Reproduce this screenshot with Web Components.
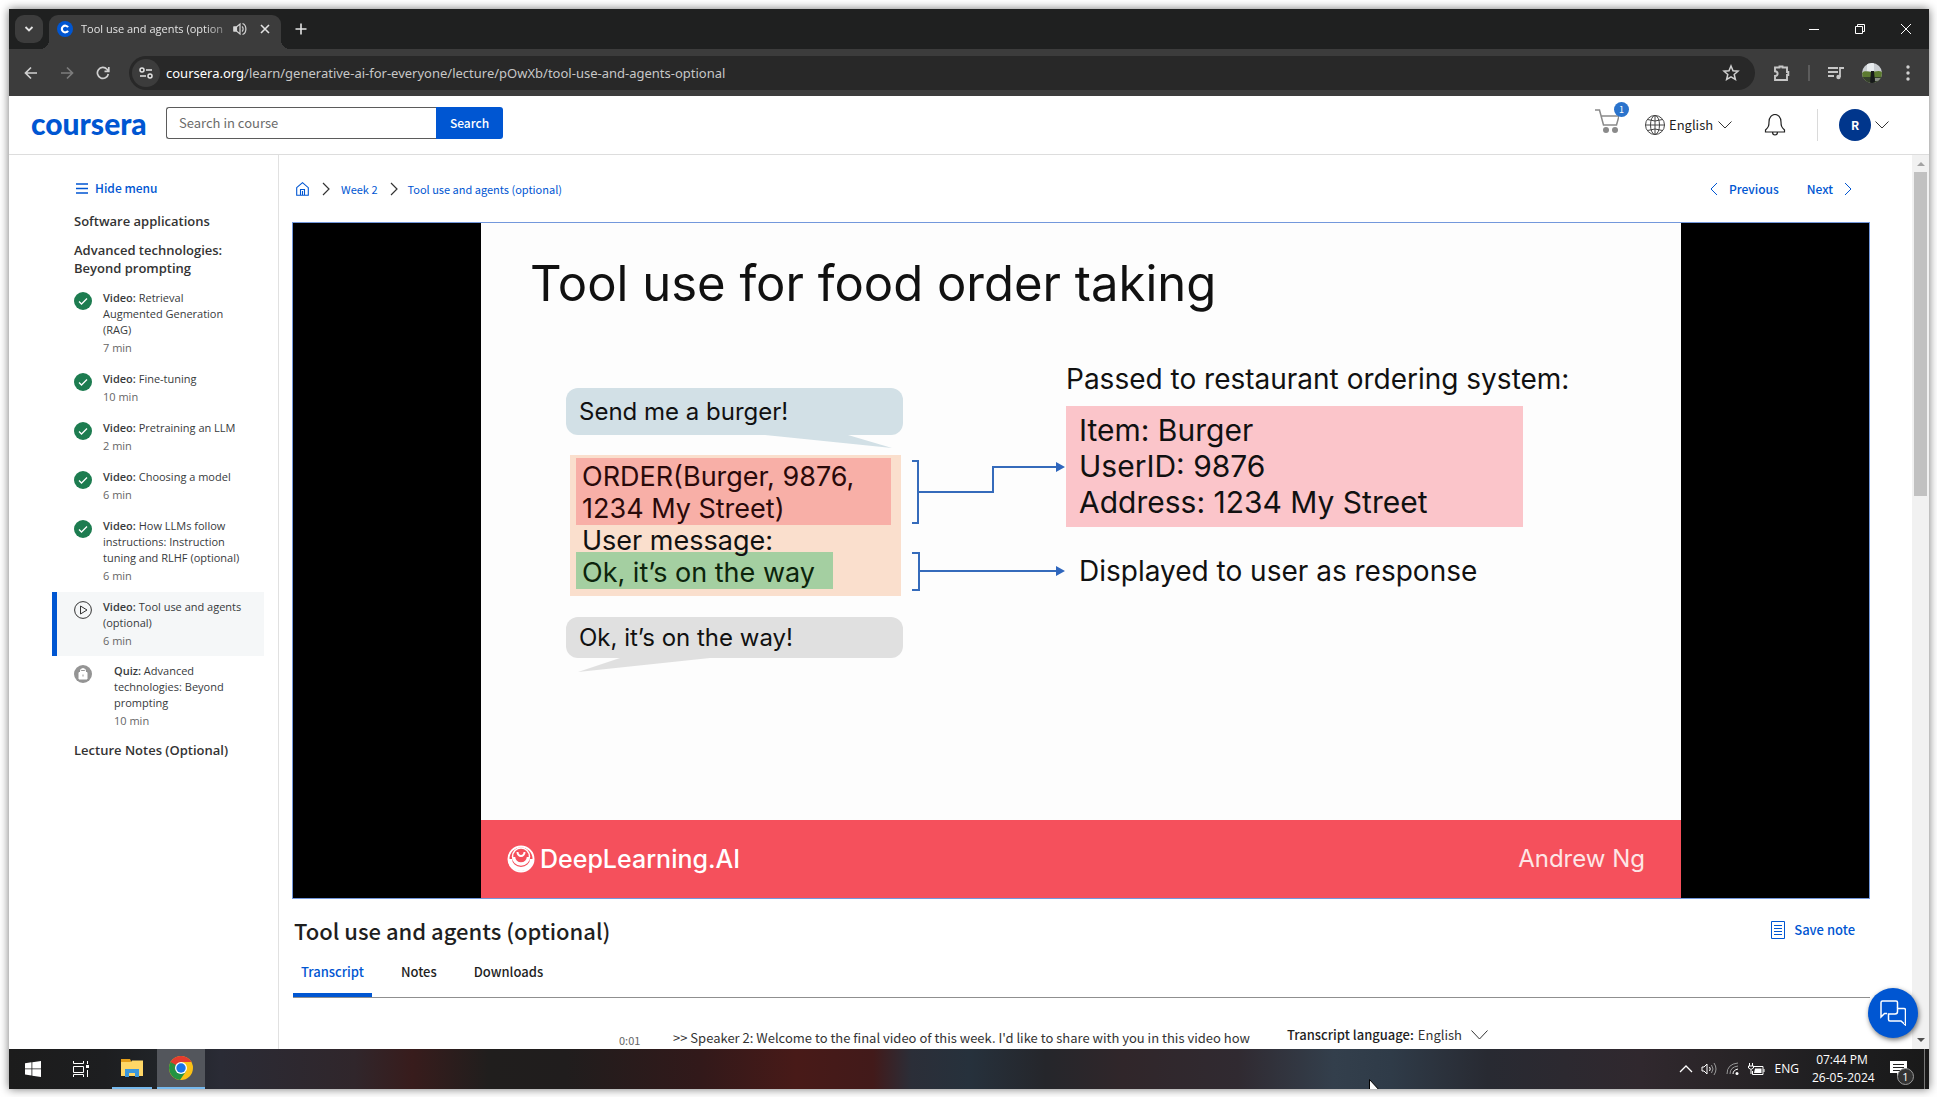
<!DOCTYPE html>
<html lang="en">
<head>
<meta charset="utf-8">
<title>Tool use and agents (optional) | Coursera</title>
<style>
html,body{margin:0;height:100%}
body{box-sizing:border-box;padding:9px 8px 8px 9px;background:#fff;overflow:hidden;
--ui:"Open Sans","Noto Sans",sans-serif;--src:"Noto Sans CJK SC","Noto Sans",sans-serif;--slide:Inter,"Open Sans",sans-serif;--blue:#0056d2;
font-family:var(--src);color:#1f1f1f}
</style>
</head>
<body>
<desktop-screen>
  <browser-tabs></browser-tabs>
  <browser-toolbar></browser-toolbar>
  <course-header></course-header>
  <course-body>
    <course-sidebar slot="side"></course-sidebar>
    <lecture-page></lecture-page>
    <page-scrollbar slot="bar"></page-scrollbar>
    <chat-button slot="chat"></chat-button>
  </course-body>
  <task-bar></task-bar>
</desktop-screen>
<script>
const base = `<style>:host,*{box-sizing:border-box}button{border:0;background:none;padding:0;margin:0;font:inherit;color:inherit;display:flex;align-items:center;justify-content:center}a{color:inherit;text-decoration:none}svg{display:block;flex:none}h1,h2,h3,p,ul{margin:0;padding:0;font-weight:inherit}</style>`;
function define(name, html) {
  const t = document.createElement('template');
  t.innerHTML = base + html;
  customElements.define(name, class extends HTMLElement {
    constructor() { super(); this.attachShadow({mode: 'open'}).append(t.content.cloneNode(true)); }
  });
}

define('desktop-screen', `<style>
:host{display:flex;flex-direction:column;height:100%;box-shadow:0 0 9px rgba(0,0,0,.55);background:#fff}
</style><slot></slot>`);

define('browser-tabs', `<style>
:host{display:flex;height:40px;background:#1f2020;padding:6px 0 0 6px;font:11px/34px var(--ui);color:#e3e3e3;flex:none}
.pick{width:28px;height:28px;border-radius:9px;background:#3c3c3c}
.tab{display:flex;align-items:center;width:232px;height:34px;margin-left:6px;padding:0 8px 6px;background:#3c3c3c;border-radius:9px 9px 0 0;position:relative}
.tab:before,.tab:after{content:"";position:absolute;bottom:0;width:9px;height:9px}
.tab:before{left:-9px;background:radial-gradient(circle at 0 0,transparent 9px,#3c3c3c 9px)}
.tab:after{right:-9px;background:radial-gradient(circle at 100% 0,transparent 9px,#3c3c3c 9px)}
.t{width:148px;margin-left:8px;white-space:nowrap;line-height:20px;-webkit-mask:linear-gradient(90deg,#000 85%,rgba(0,0,0,.3))}
.snd{margin-left:6px}.x{margin-left:10px;width:16px;height:28px}
.plus{width:28px;height:28px;margin-left:6px}
.win{margin-left:auto;display:flex}.win button{width:46px;height:28px}
</style>
<button class="pick" aria-label="Search tabs"><svg width="10" height="8" fill="none" stroke="#e3e3e3" stroke-width="1.8"><path d="M1.5 2 5 5.5 8.500 2"/></svg></button>
<div class="tab"><svg width="16" height="16" viewBox="0 0 16 16"><circle cx="8" cy="8" r="8" fill="#0056d2"/><path d="M11 9.700A3.300 3.300 0 1 1 11 6.300" fill="none" stroke="#fff" stroke-width="2.200"/></svg>
<span class="t">Tool use and agents (option</span>
<svg class="snd" width="14" height="14" viewBox="0 0 14 14" fill="none" stroke="#d5d5d5" stroke-width="1.200"><path d="M9 4.500c1.500 1.200 1.500 3.800 0 5M9.500 1.500c4.500 1.500 4.500 9.500 0 11" /><path d="M1 5v4h2.500L7 12V2L3.500 5z"/><path d="M1 5v4h2.500V5z" fill="#d5d5d5"/></svg>
<button class="x" aria-label="Close tab"><svg width="10" height="10" stroke="#e3e3e3" stroke-width="1.600"><path d="m1 1 8 8m0-8-8 8"/></svg></button></div>
<button class="plus" aria-label="New tab"><svg width="12" height="12" stroke="#e3e3e3" stroke-width="1.600"><path d="M6 .5v11M.5 6h11"/></svg></button>
<div class="win"><button aria-label="Minimize"><svg width="10" height="10" stroke="#fff"><path d="M0 5.500h10"/></svg></button>
<button aria-label="Restore"><svg width="10" height="10" stroke="#fff" fill="none"><path d="M.5 2.500h7v7h-7zM2.500 2.500v-2h7v7h-2"/></svg></button>
<button aria-label="Close"><svg width="10" height="10" stroke="#fff"><path d="m0 0 10 10m0-10L0 10"/></svg></button></div>`);

define('browser-toolbar', `<style>
:host{display:flex;align-items:center;height:47px;background:#3c3c3c;flex:none;padding:0 3px 0 4px}
:host>button{width:36px;height:34px;flex:none}
.omni{flex:1;display:flex;align-items:center;height:34px;background:#282828;border-radius:17px;margin:0 9px 0 8px;padding:0 15px 0 3px}
.tune{width:28px;height:28px;border-radius:14px;background:#3c3c3c;flex:none}
.url{flex:1;margin-left:6px;color:#c7c7c7;font:13px/34px "Noto Sans",sans-serif}.url b{font-weight:400;color:#fff}
.sep{width:2px;height:16px;background:#5c5c5c;margin:0 8px}
</style>
<button aria-label="Back"><svg width="14" height="14" fill="none" stroke="#d0d0d0" stroke-width="1.700"><path d="M13 7H2M7 1.500 1.500 7 7 12.500"/></svg></button>
<button aria-label="Forward"><svg width="14" height="14" fill="none" stroke="#7c7c7c" stroke-width="1.700"><path d="M1 7h11M7 1.500 12.500 7 7 12.500"/></svg></button>
<button aria-label="Reload"><svg width="14" height="14" fill="none" stroke="#d0d0d0" stroke-width="1.700"><path d="M12.300 8A5.500 5.500 0 1 1 11 3.200L12.500 5M12.800 1v4.300H8.500"/></svg></button>
<div class="omni"><button class="tune" aria-label="Site information"><svg width="14" height="14" fill="none" stroke="#e3e3e3" stroke-width="1.500"><circle cx="3" cy="4" r="2"/><path d="M7 4h6M1 10h6"/><circle cx="11" cy="10" r="2"/></svg></button>
<span class="url"><b>coursera.org</b>/learn/generative-ai-for-everyone/lecture/pOwXb/tool-use-and-agents-optional</span>
<button aria-label="Bookmark"><svg width="18" height="18" viewBox="0 0 18 18" fill="none" stroke="#d0d0d0" stroke-width="1.500"><path d="m9 2 2 4.800 5 .4-3.800 3.300 1.200 5L9 12.800l-4.400 2.700 1.200-5L2 7.200l5-.4z"/></svg></button></div>
<button aria-label="Extensions"><svg width="18" height="18" viewBox="0 0 18 18" fill="none" stroke="#c7c7c7" stroke-width="1.900"><path d="M2 3.500h4.500v-1h3v1h4.500v4.500h1.300v3h-1.300V16H2v-4c3.500-.2 3.500-4.500 0-4.700z"/></svg></button>
<div class="sep"></div>
<button aria-label="Media"><svg width="18" height="16" viewBox="0 0 18 16" fill="none" stroke="#c7c7c7" stroke-width="1.800"><path d="M1 3h10M1 7h10M1 11h6M13 12V3h4"/><circle cx="11.500" cy="12" r="2.200" fill="#c7c7c7" stroke="none"/></svg></button>
<button aria-label="Profile"><svg width="20" height="20" viewBox="0 0 20 20"><defs><clipPath id="c"><circle cx="10" cy="10" r="10"/></clipPath></defs><g clip-path="url(#c)"><path fill="#c9cdd1" d="M0 0h20v20H0z"/><path fill="#e8ecee" d="M5 0h7v8H5z"/><path fill="#5c7a30" d="M0 10c3-3 6-1 9-1s8-2 11 0v11H0z"/><path fill="#35402c" d="M0 14h20v6H0z"/><path fill="#16181a" d="M9 8h3l1 12H8z"/><path fill="#8b8f88" d="M13 15h7v3h-7z"/></g></svg></button>
<button aria-label="Menu"><svg width="4" height="16" fill="#d0d0d0"><circle cx="2" cy="2" r="1.700"/><circle cx="2" cy="8" r="1.700"/><circle cx="2" cy="14" r="1.700"/></svg></button>`);

define('course-header', `<style>
:host{display:flex;align-items:center;height:59px;border-bottom:1px solid #ddd;background:#fff;flex:none;padding:0 40px 0 22px;font:14px/20px var(--src)}
.logo{font:900 30px/32px Lato,sans-serif;color:var(--blue);width:135px;flex:none;padding-bottom:4px}
form{display:flex;height:32px;margin-bottom:4px}
input{width:270px;border:1px solid #5b5b5b;border-right:0;border-radius:3px 0 0 3px;padding:0 0 0 12px;font:13px/20px var(--src);color:#1f1f1f;outline:0}
input::placeholder{color:#6b6b6b;opacity:1}
form button{width:67px;background:var(--blue);color:#fff;font-weight:500;font-size:12px;border-radius:0 3px 3px 0}
.r{margin-left:auto;display:flex;align-items:center}
.cart{position:relative;width:24px;margin:0 26px 8px 0}
.cart i{position:absolute;left:19px;top:-7px;width:15px;height:15px;border-radius:8px;background:#2a73cc;color:#fff;font:9px/15px var(--src);text-align:center}
.lang{display:flex;align-items:center;gap:4px}
select{appearance:none;border:0;background:none;padding:0;margin:0;font:13px/20px var(--src);color:#1f1f1f}
.bell{margin:0 31px 0 32px}.sep{width:1px;height:32px;background:#dadada;margin-right:21px}
.me{margin-right:8px}.me b{width:32px;height:32px;border-radius:16px;background:#00368c;color:#fff;font:700 12px/32px var(--src)}
</style>
<a class="logo" href="#">coursera</a>
<form role="search"><input aria-label="Search in course" placeholder="Search in course"><button type="button">Search</button></form>
<div class="r"><button class="cart" aria-label="Shopping cart"><svg width="24" height="24" viewBox="0 0 24 24" fill="none" stroke="#8a8a8a" stroke-width="1.500"><path d="M0 1h4.500l4 15h13l2.500-9H6"/><circle cx="11" cy="21" r="3" fill="#8a8a8a" stroke="none"/><circle cx="20" cy="21" r="3" fill="#8a8a8a" stroke="none"/></svg><i>1</i></button>
<label class="lang"><svg width="20" height="20" viewBox="0 0 20 20" fill="none" stroke="#444"><circle cx="10" cy="10" r="9.500"/><ellipse cx="10" cy="10" rx="4.500" ry="9.500"/><path d="M10 .5v19M.5 10h19M2.500 4.500q7.500 3 15 0M2.500 15.500q7.500-3 15 0"/></svg><select aria-label="Language"><option>English</option></select><svg width="14" height="8" fill="none" stroke="#333"><path d="m.5.500 6.500 6.500 6.500-6.500"/></svg></label>
<button class="bell" aria-label="Notifications"><svg width="22" height="22" viewBox="0 0 22 22" fill="none" stroke="#222" stroke-width="1.200"><path d="M1.500 18v-2c3-3 3.500-4 3.500-8 0-10 12-10 12 0 0 4 .5 5 3.500 8v2zM8.500 18c0 4 5 4 5 0"/></svg></button>
<div class="sep"></div><button class="me" aria-label="Account" style="margin-right:4px"><b>R</b></button><svg width="14" height="8" fill="none" stroke="#333"><path d="m.5.500 6.500 6.500 6.500-6.500"/></svg></div>`);

define('course-body', `<style>
:host{display:flex;flex:1;min-height:0;overflow:hidden;position:relative;background:#fff}
</style><slot name="side"></slot><slot></slot><slot name="bar"></slot><slot name="chat"></slot>`);

customElements.define('nav-item', class extends HTMLElement {
  connectedCallback() {
    const s = this.getAttribute('state') || 'done';
    const icons = {
      done: '<circle cx="9" cy="9" r="9" fill="#1d7c50"/><path d="m5 9.500 2.500 2.500 5.500-5.500" fill="none" stroke="#fff" stroke-width="1.300"/>',
      play: '<circle cx="9" cy="9" r="8.400" fill="none" stroke="#333"/><path d="M6.500 5v8l6.500-4z" fill="none" stroke="#333"/>',
      lock: '<circle cx="9" cy="9" r="9" fill="#949494"/><path d="M5 7.500h8V14H5zM6.500 7.500V5.500c0-2.500 5-2.500 5 0v2" fill="#fff" stroke="#fff"/><path d="M7.200 5.500h3.600M9 9.500v2" stroke="#949494"/>'
    };
    this.attachShadow({mode: 'open'}).innerHTML = base + `<style>
:host{display:block;font:11px/16px var(--ui)}
a{display:flex;padding:7px 20px 8px 17px;border-left:5px solid transparent;color:#373a3c}
:host([state=play]) a{background:#f5f7f8;border-color:var(--blue);padding-bottom:7px}
svg{margin-top:2px}div{margin-left:11px;min-width:0;white-space:nowrap}:host([state=lock]) div{margin-left:22px}
b{font-weight:600}p{color:#666;line-height:18px;padding-top:1px;height:18px}
</style><a href="#"><svg width="18" height="18" viewBox="0 0 18 18">${icons[s]}</svg><div><b>${this.getAttribute('kind')}:</b> <slot></slot><p>${this.getAttribute('time')}</p></div></a>`;
  }
});

define('course-sidebar', `<style>
:host{display:block;width:270px;flex:none;border-right:1px solid #e1e1e1;padding:21px 14px 0 43px}
.hide{gap:7px;margin-left:24px;color:var(--blue);font:500 12px/24px var(--src)}
h2{font:600 13px/18px var(--ui);color:#333;padding:11px 0 0 22px}
.h1{padding-top:12px}.h4{padding-top:4px}.adv{padding-bottom:6px}
</style>
<button class="hide"><svg width="12" height="11" stroke="#0056d2" stroke-width="1.500"><path d="M0 1h12M0 5.500h12M0 10h12"/></svg>Hide menu</button>
<h2 class="h1">Software applications</h2>
<h2 class="adv">Advanced technologies:<br>Beyond prompting</h2>
<nav-item kind="Video" time="7 min">Retrieval<br>Augmented Generation<br>(RAG)</nav-item>
<nav-item kind="Video" time="10 min">Fine-tuning</nav-item>
<nav-item kind="Video" time="2 min">Pretraining an LLM</nav-item>
<nav-item kind="Video" time="6 min">Choosing a model</nav-item>
<nav-item kind="Video" time="6 min">How LLMs follow<br>instructions: Instruction<br>tuning and RLHF (optional)</nav-item>
<nav-item kind="Video" time="6 min" state="play">Tool use and agents<br>(optional)</nav-item>
<nav-item kind="Quiz" time="10 min" state="lock">Advanced<br>technologies: Beyond<br>prompting</nav-item>
<h2 class="h4">Lecture Notes (Optional)</h2>`);

define('slide-view', `<style>
:host{display:flex;flex-direction:column;height:100%;aspect-ratio:16/9;background:#fdfdfd;font-family:var(--slide);color:#111}
h1{font-size:49px;line-height:60px;padding:31px 0 0 49px;height:137px}
.stage{display:flex;padding-left:85px;flex:1}
.left{width:337px;padding-top:28px}
.bub{display:flex;align-items:center;height:47px;border-radius:12px;background:#d2e0e6;padding-left:13px;font-size:24px;position:relative}
.bub svg{position:absolute;top:100%;left:0}
.grey{background:#e0e0e0;height:41px;margin-top:21px}
.order{background:#fadfcd;margin:20px 2px 0 4px;height:141px;padding:3px 10px 7px 6px;font-size:27px;line-height:32px}
.order p{padding-left:6px;white-space:nowrap}
.red{background:#f8afa7;height:67px;padding-top:3px;color:#2a0a0a}
.msg{height:27px;line-height:32px}
.green{background:#a4cfa1;height:37px;width:257px;line-height:42px;color:#0c240c}
.right{width:509px;font-size:28px}
.right>p{line-height:38px;white-space:nowrap}
.pink{background:#fbc5ca;width:457px;height:121px;margin-top:8px;padding:6px 0 0 13px;font-size:30px;line-height:36px}
.right .resp{padding:25px 0 0 13px}
footer{display:flex;align-items:center;height:78px;background:#f5505c;color:#fff;padding:0 36px 0 26px;font-size:24px;flex:none}
footer b{font-weight:500;font-size:25px;margin-left:5px}footer span{margin-left:auto;color:#fde6e6}
</style>
<h1>Tool use for food order taking</h1>
<div class="stage">
<div class="left">
<div class="bub">Send me a burger!<svg width="337" height="14"><path d="M199 0h83l44 13z" fill="#d2e0e6"/></svg></div>
<div class="order"><p class="red">ORDER(Burger, 9876,<br>1234 My Street)</p><p class="msg">User message:</p><p class="green">Ok, it’s on the way</p></div>
<div class="bub grey">Ok, it’s on the way!<svg width="337" height="15"><path d="M54 0h90L12 14z" fill="#e0e0e0"/></svg></div>
</div>
<svg width="163" height="312" fill="none" stroke="#356bbb" stroke-width="2"><path d="M9 101h6v62H9M15 132h75v-25h64M9 193h7v37H9M16 211h138"/><path d="m153 102 9 5-9 5zM153 206l9 5-9 5z" fill="#2f66bd" stroke="none"/></svg>
<div class="right"><p>Passed to restaurant ordering system:</p>
<div class="pink"><p>Item: Burger</p><p>UserID: 9876</p><p>Address: 1234 My Street</p></div>
<p class="resp">Displayed to user as response</p></div>
</div>
<footer><svg width="28" height="28" viewBox="0 0 28 28" fill="none" stroke="#fff"><circle cx="14" cy="14" r="12.500" stroke-width="2"/><path d="M3 14a11 10 0 0 0 22 0" stroke-width="4"/><circle cx="14" cy="11.500" r="8.500" stroke-width="1.500"/><path d="M7 12a7 6.500 0 0 0 14 0" stroke-width="2.500"/><path d="M10.500 7a3.500 4 0 1 0 7 0" stroke-width="2"/></svg><b>DeepLearning.AI</b><span>Andrew Ng</span></footer>`);

define('lecture-page', `<style>
:host{display:block;flex:1;min-width:0;padding:0 42px 0 13px;font:13px/20px var(--src)}
.crumbs{display:flex;align-items:center;height:67px;color:var(--blue);font-size:11px}
.crumbs .home{margin:0 4px 0 4px}.crumbs .c1{margin:0 11px 0 9px}.crumbs .c2{margin:0 10px 0 12px}
.pg{margin-left:auto;display:flex;gap:28px;font-weight:500;font-size:12px;margin-right:18px}
.pg a{display:flex;align-items:center}.pg .p{margin:0 11px 0 0}.pg .n{margin:0 0 0 11px}
.video{display:flex;justify-content:center;height:677px;background:#000;border:1px solid #7398dc}
.head{display:flex;align-items:center;height:61px;padding:0 15px 0 2px}
h1{font:500 22px/32px var(--src)}
.save{margin-left:auto;gap:9px;color:var(--blue);font-weight:500;font-size:13px}
.tabs{display:flex;border-bottom:1px solid #8f8f8f;height:38px;margin-left:1px;font-weight:500;font-size:13px}
.tabs button{padding:0 8px;height:37px;align-items:flex-start;padding-top:2px;margin-right:21px;border-bottom:4px solid transparent}
.tabs .on{color:var(--blue);border-color:var(--blue);border-radius:2px 2px 0 0}
.row{display:flex;padding:27px 0 0 327px;white-space:nowrap}
time{font-size:11px;line-height:24px;padding-top:3px;color:#666;width:54px}.row p{font-size:13px;line-height:26px;color:#333;width:614px}
label{display:flex;align-items:center;height:20px;font-weight:500;font-size:13px}
select{appearance:none;border:0;background:none;padding:0;margin:0 8px 0 4px;font:13px/20px var(--src);color:#333}
</style>
<nav class="crumbs"><a href="#" aria-label="Home"><svg class="home" width="13" height="14" viewBox="0 0 13 14" fill="none" stroke="#0056d2" stroke-width="1.100"><path d="M.7 5.700 6.500.700l5.800 5v7.600H.700zM4.500 13V7.500h4V13M6.500 9v4"/></svg></a>
<svg class="c1" width="8" height="14" fill="none" stroke="#333" stroke-width="1.200"><path d="m1 1 6 6-6 6"/></svg><a href="#">Week 2</a>
<svg class="c2" width="8" height="14" fill="none" stroke="#333" stroke-width="1.200"><path d="m1 1 6 6-6 6"/></svg><a href="#">Tool use and agents (optional)</a>
<span class="pg"><a href="#"><svg class="p" width="8" height="14" fill="none" stroke="#0056d2"><path d="M7 1 1 7l6 6"/></svg>Previous</a><a href="#">Next<svg class="n" width="8" height="14" fill="none" stroke="#0056d2"><path d="m1 1 6 6-6 6"/></svg></a></span></nav>
<div class="video"><slide-view></slide-view></div>
<div class="head"><h1>Tool use and agents (optional)</h1><button class="save"><svg width="14" height="18" fill="none" stroke="#0056d2"><path d="M.5.500h13v17H.500zM3 4.500h8M3 7.500h8M3 10.500h8M3 13.500h8"/></svg>Save note</button></div>
<div class="tabs" role="tablist"><button role="tab" class="on">Transcript</button><button role="tab">Notes</button><button role="tab">Downloads</button></div>
<div class="row"><time>0:01</time><p>&gt;&gt; Speaker 2: Welcome to the final video of this week. I'd like to share with you in this video how</p>
<label>Transcript language:<select><option>English</option></select><svg width="17" height="10" fill="none" stroke="#333"><path d="m.5.500 8 8.500 8-8.500"/></svg></label></div>`);

define('page-scrollbar', `<style>
:host{display:flex;flex-direction:column;justify-content:space-between;align-items:center;width:17px;background:#f1f1f1;flex:none;padding:7px 0}
.u{display:flex;flex-direction:column;align-items:center;gap:6px}i{width:13px;height:324px;background:#c1c1c1}
</style><div class="u"><svg width="8" height="4" fill="#a3a3a3"><path d="M0 4h8L4 0z"/></svg><i></i></div><svg width="8" height="4" fill="#505050"><path d="M0 0h8L4 4z"/></svg>`);

define('chat-button', `<style>
:host{position:absolute;right:11px;bottom:11px}
button{width:50px;height:50px;border-radius:25px;background:var(--blue);box-shadow:1px 2px 5px rgba(0,0,0,.55)}
</style><button aria-label="Open chat"><svg width="26" height="26" viewBox="0 0 26 26" fill="none" stroke="#fff" stroke-width="1.500"><path d="M17.500 8V2.500q0-1.500-1.500-1.500H2.500Q1 1 1 2.500V17l3.500-3.500H7"/><path d="M17.500 8.500H24q1.500 0 1.500 1.500v15L21 21H10q-1.500 0-1.500-1.500V14H15q2.500 0 2.500-2.500z"/></svg></button>`);

define('task-bar', `<style>
:host{display:flex;height:40px;flex:none;color:#fff;font:12px/18px var(--ui);position:relative;overflow:hidden;
background:linear-gradient(90deg,#1c1c1c 0,#1d1e20 5%,#22262b 9%,#2a2b35 11%,#30262b 18%,#381c1c 21%,#201e1d 25%,#201d1d 29%,#32191a 36%,#481a18 41%,#421a1a 45%,#2b2e38 47%,#26313c 50%,#25262b 54%,#30262a 58%,#302a31 64%,#333f4c 69%,#2f3b48 72%,#282a32 77%,#30282e 85%,#2a2528 89%,#1e1e20 95%,#191919)}
:host>button{width:48px;height:40px}
.task{border-bottom:2px solid #76b9ed}.chrome{background:#53565c}.files{width:40px!important;margin:0 5px 0 7px}
.tray{margin-left:auto;display:flex;align-items:center}
.tray>svg{margin-right:8px}
.lang{margin:0 13px 0 2px}.clock{text-align:center;width:60px;margin-right:16px;white-space:nowrap}
.act{position:relative;width:26px;height:40px;margin-right:10px}
.act svg{margin:0 6px 0 0}.act i{position:absolute;left:9px;top:19px;width:17px;height:17px;border:1px solid #999;border-radius:9px;background:#333;font:11px/15px var(--ui);text-align:center}
.peek{width:1px;height:40px;background:#777;margin-right:4px}
.cur{position:absolute;left:71%;top:30px;margin-left:-3px}
</style>
<button aria-label="Start"><svg width="16" height="16" fill="#fff"><path d="M0 2.200 6.500 1.300v6.200H0zM7.300 1.200 16 0v7.500H7.300zM0 8.300h6.500v6.200L0 13.600zM7.300 8.300H16V16l-8.700-1.200z"/></svg></button>
<button aria-label="Task view"><svg width="16" height="16" fill="none" stroke="#fff"><path d="M.5 0v2.500h10V0M.500 5.500h10v6H.500zM.5 16v-2.500h10V16M14.500 0v3M14.500 9v7"/><path d="M13 4h3v3h-3z" fill="#fff" stroke="none"/></svg></button>
<button class="task files" aria-label="File Explorer"><svg width="22" height="18" viewBox="0 0 22 18"><path fill="#e59f1a" d="M0 0h9l1 2v2H0z"/><path fill="#ffd766" d="M0 3h10l1-1.500h11V17H0z"/><path fill="#3b97dc" d="M4 18v-8h14v8h-4v-4H8v4z"/></svg></button>
<button class="task chrome" aria-label="Google Chrome"><svg width="24" height="24" viewBox="0 0 24 24"><circle cx="12" cy="12" r="12" fill="#fbc116"/><path d="M12 12 1.600 6A12 12 0 0 0 11 23.900L17.200 15z" fill="#229342"/><path d="M1.600 6A12 12 0 0 1 22.400 6H12v6L6.800 15z" fill="#e33b2e"/><path d="M1.600 6 6.800 15 12 12z" fill="#229342"/><circle cx="12" cy="12" r="6" fill="#fff"/><circle cx="12" cy="12" r="4.700" fill="#1a73e8"/></svg></button>
<div class="tray">
<svg width="14" height="8" fill="none" stroke="#fff" stroke-width="1.300"><path d="m1 7 6-6 6 6"/></svg>
<svg width="17" height="14" fill="none" stroke="#fff"><path d="M1 5v4h2l3 3V2L3 5zM8.500 5q1.500 2 0 4"/><path d="M10.500 3q3 4 0 8M13 1q4 6 0 12" stroke="#999"/></svg>
<svg width="14" height="14" fill="none" stroke="#999"><path d="M1 12Q1 2 12 1M4 12Q4 5 12 4"/><path d="M7 12Q7 8 12 7" stroke="#fff"/><circle cx="11" cy="11.500" r="1.500" fill="#fff" stroke="none"/></svg>
<svg width="17" height="13" fill="none" stroke="#fff"><path d="M5.500 3.500H15v8H4.500V8M1.500 0v3M4.500 0v3M.5 3h5v2q-2.500 3-5 0zM3 7v4M16 6v3"/><path d="M7 5.500h6.500v4.500H6z" fill="#fff" stroke="none"/></svg>
<span class="lang">ENG</span><span class="clock">07:44 PM<br>26-05-2024</span>
<button class="act" aria-label="Notifications"><svg width="17" height="16" viewBox="0 0 17 16"><path d="M0 0h17v12h-6l-4 4v-4H0z" fill="#fff"/><path d="M3 3.500h11M3 6.500h11M3 9.500h8" stroke="#222" stroke-width="1.200"/></svg><i>1</i></button><span class="peek"></span></div>
<svg class="cur" width="12" height="18"><path d="M.5.500v16l4-3 3 5 2-1-2.500-5h4.500z" fill="#fff" stroke="#000"/></svg>`);
</script>
</body>
</html>
